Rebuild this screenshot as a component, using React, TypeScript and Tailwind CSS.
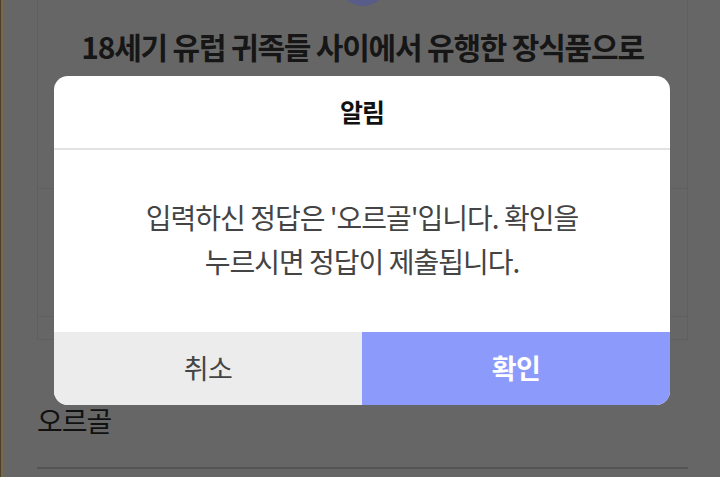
import React from "react";

export default function App() {
  const font = "font-['Noto_Sans_CJK_KR','Noto_Sans',sans-serif]";
  return (
    <div className={`w-[720px] h-[477px] relative overflow-hidden bg-[#666666] flex ${font}`}>
      <div className="w-[3px] bg-[#7a6648] border-l border-[#4a3f2e]" />
      <div className="flex-1 pl-[34px] pr-[32px] flex flex-col">
        <div className="h-[340px] border-x border-b border-[#5f5f5f] flex flex-col">
          <div className="mx-auto w-[50px] h-[50px] rounded-full bg-[#575c88] -mt-[44px] shrink-0" />
          <div className="mt-[20px] text-center text-[30px] leading-[40px] font-bold tracking-[-1.2px] text-[#161616]">
            18세기 유럽 귀족들 사이에서 유행한 장식품으로
          </div>
          <div className="mt-[122px] flex-1 border-t border-[#5f5f5f] flex flex-col">
            <div className="flex-1 border-b border-[#5f5f5f]" />
            <div className="h-[22px]" />
          </div>
        </div>
        <div className="mt-[63px] text-[28px] leading-[34px] text-[#111111] tracking-[-1px]">
          오르골
        </div>
        <div className="mt-auto mb-[8px] h-[2px] bg-[#545454]" />
      </div>

      <div className="absolute left-[54px] top-[76px] w-[616px] h-[329px] bg-white rounded-[14px] overflow-hidden flex flex-col">
        <div className="h-[72px] flex items-center justify-center text-[25px] font-bold text-[#111] tracking-[-1px]">
          알림
        </div>
        <div className="h-[2px] bg-[#e2e2e2]" />
        <div className="flex-1 flex flex-col items-center justify-center text-[28px] leading-[44px] text-[#444] tracking-[-1px] pb-[4px]">
          <div>입력하신 정답은 '오르골'입니다. 확인을</div>
          <div>누르시면 정답이 제출됩니다.</div>
        </div>
        <div className="h-[73px] flex">
          <div className="w-[308px] bg-[#ececec] flex items-center justify-center text-[27px] text-[#444] tracking-[-0.5px]">
            취소
          </div>
          <div className="flex-1 bg-[#8c9afc] flex items-center justify-center text-[27px] font-bold text-white tracking-[-0.5px]">
            확인
          </div>
        </div>
      </div>
    </div>
  );
}
